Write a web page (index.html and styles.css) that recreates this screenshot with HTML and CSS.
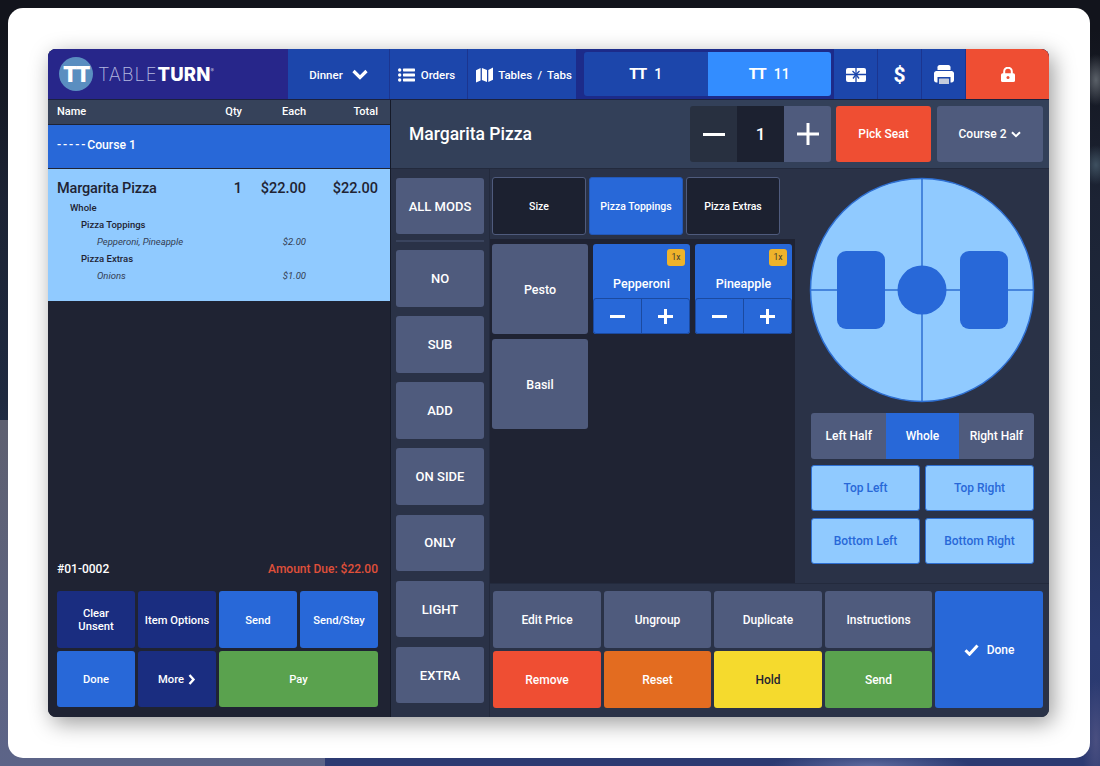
FILE: index.html
```html
<!DOCTYPE html>
<html>
<head>
    <title>TableTurn POS</title>
    <link rel="stylesheet" href="styles.css">
</head>
<body>
    <div class="card">
        <div class="app">
            <!-- Top bar -->
            <div class="topbar">
                <div class="logo">
                    <span class="logo-mark">TT</span>
                    <span class="logo-word">TABLE<b>TURN</b><i>&reg;</i></span>
                </div>
                <div class="nav nav-dinner">
                    <span>Dinner</span>
                    <svg width="16" height="11" viewBox="0 0 16 11"><path d="M1.500 2l6.500 6.500L14.500 2" fill="none" stroke="#fff" stroke-width="3.200"/></svg>
                </div>
                <div class="nav nav-orders">
                    <svg width="17" height="14" viewBox="0 0 17 14" fill="#fff"><circle cx="1.700" cy="2" r="1.700"/><circle cx="1.700" cy="7" r="1.700"/><circle cx="1.700" cy="12" r="1.700"/><rect x="5" y=".6" width="12" height="2.800" rx=".6"/><rect x="5" y="5.600" width="12" height="2.800" rx=".6"/><rect x="5" y="10.600" width="12" height="2.800" rx=".6"/></svg>
                    <span>Orders</span>
                </div>
                <div class="nav nav-tables">
                    <svg width="17" height="16" viewBox="0 0 17 16" fill="#fff"><path d="M0 3.200L4.600 1v12.400L0 15.600zM5.900 1L11 3v12l-5.100-2zM12.300 3L17 .4v12.400L12.300 15z"/></svg>
                    <span>Tables / Tabs</span>
                </div>
                <div class="terminals">
                    <div class="terminal"><span class="tt">TT</span> <span>1</span></div>
                    <div class="terminal terminal-on"><span class="tt">TT</span> <span>11</span></div>
                </div>
                <div class="nav nav-icon">
                    <svg width="20" height="14" viewBox="0 0 20 14"><rect width="20" height="14" rx="2" fill="#fff"/><path d="M10 0v14M0 6.500h20" stroke="#1c46ab" stroke-width="1.300"/><path d="M10 6.500L6.500 3M10 6.500L13.500 3M10 6.500L7 10.500M10 6.500l3 4" stroke="#1c46ab" stroke-width="1.300" fill="none"/></svg>
                </div>
                <div class="nav nav-icon nav-dollar">$</div>
                <div class="nav nav-icon">
                    <svg width="20" height="19" viewBox="0 0 20 19"><path d="M3.500 5V2.200C3.500 1 4.400 0 5.600 0h8.800c1.200 0 2.100 1 2.100 2.200V5z" fill="#fff"/><path d="M2.400 6h15.200C18.900 6 20 7.100 20 8.400V15c0 1.300-1 2.400-2.400 2.400h-1.100V12h-13v5.400H2.400C1 17.400 0 16.300 0 15V8.400C0 7.100 1.100 6 2.400 6z" fill="#fff"/><rect x="5" y="13.500" width="10" height="5.500" rx=".6" fill="#c4cbdc"/></svg>
                </div>
                <div class="nav nav-lock">
                    <svg width="14" height="15" viewBox="0 0 14 15"><path d="M3.200 7V4.500a3.800 3.800 0 0 1 7.600 0V7" fill="none" stroke="#fff" stroke-width="2"/><rect y="6.200" width="14" height="8.800" rx="1.600" fill="#fff"/><circle cx="7" cy="10.600" r="1.500" fill="#ef4e33"/></svg>
                </div>
            </div>

            <div class="main">
                <!-- Check on the left -->
                <div class="check">
                    <div class="check-head row">
                        <span>Name</span><span class="num">Qty</span><span class="num">Each</span><span class="num">Total</span>
                    </div>
                    <div class="course"><span class="dashes">-----</span>Course 1</div>
                    <div class="line">
                        <div class="row line-main">
                            <span>Margarita Pizza</span><span class="num">1</span><span class="num">$22.00</span><span class="num">$22.00</span>
                        </div>
                        <div class="row sub sub-1"><span>Whole</span></div>
                        <div class="row sub sub-2"><span>Pizza Toppings</span></div>
                        <div class="row sub sub-3"><span>Pepperoni, Pineapple</span><span></span><span class="num">$2.00</span></div>
                        <div class="row sub sub-2"><span>Pizza Extras</span></div>
                        <div class="row sub sub-3"><span>Onions</span><span></span><span class="num">$1.00</span></div>
                    </div>
                    <div class="check-space"></div>
                    <div class="check-info">
                        <span class="order-no">#01-0002</span>
                        <span class="due">Amount Due: $22.00</span>
                    </div>
                    <div class="check-btns">
                        <div class="btn navy">Clear<br>Unsent</div>
                        <div class="btn navy">Item Options</div>
                        <div class="btn blue">Send</div>
                        <div class="btn blue">Send/Stay</div>
                        <div class="btn blue">Done</div>
                        <div class="btn navy">More
                            <svg class="more-chev" width="8" height="11" viewBox="0 0 8 11"><path d="M1.500 1l4 4.500-4 4.500" fill="none" stroke="#fff" stroke-width="2.400"/></svg>
                        </div>
                        <div class="btn green wide">Pay</div>
                    </div>
                </div>

                <!-- Item editor -->
                <div class="editor">
                    <div class="item-bar">
                        <div class="item-title">Margarita Pizza</div>
                        <div class="stepper">
                            <div class="step step-minus"><svg width="22" height="3" viewBox="0 0 22 3"><rect width="22" height="3" fill="#fff"/></svg></div>
                            <div class="step step-val">1</div>
                            <div class="step step-plus"><svg width="22" height="22" viewBox="0 0 22 22"><path d="M0 11h22M11 0v22" stroke="#fff" stroke-width="3"/></svg></div>
                        </div>
                        <div class="btn red pick-seat">Pick Seat</div>
                        <div class="btn slate course-btn">Course 2
                            <svg width="10" height="7" viewBox="0 0 10 7"><path d="M1 1.200l4 4 4-4" fill="none" stroke="#fff" stroke-width="2"/></svg>
                        </div>
                    </div>
                    <div class="work">
                        <div class="mods">
                            <div class="btn slate mod mod-all">ALL MODS</div>
                            <div class="mods-rule"></div>
                            <div class="btn slate mod">NO</div>
                            <div class="btn slate mod">SUB</div>
                            <div class="btn slate mod">ADD</div>
                            <div class="btn slate mod">ON SIDE</div>
                            <div class="btn slate mod">ONLY</div>
                            <div class="btn slate mod">LIGHT</div>
                            <div class="btn slate mod">EXTRA</div>
                        </div>
                        <div class="work-right">
                            <div class="work-top">
                                <div class="middle">
                                    <div class="tabs">
                                        <div class="tab">Size</div>
                                        <div class="tab tab-on">Pizza Toppings</div>
                                        <div class="tab">Pizza Extras</div>
                                    </div>
                                    <div class="options">
                                        <div class="btn slate option">Pesto</div>
                                        <div class="topping">
                                            <span class="badge">1x</span>
                                            <div class="topping-name">Pepperoni</div>
                                            <div class="topping-steps">
                                                <div><svg width="15" height="3" viewBox="0 0 15 3"><rect width="15" height="3" fill="#fff"/></svg></div>
                                                <div><svg width="15" height="15" viewBox="0 0 15 15"><path d="M0 7.500h15M7.500 0v15" stroke="#fff" stroke-width="3"/></svg></div>
                                            </div>
                                        </div>
                                        <div class="topping">
                                            <span class="badge">1x</span>
                                            <div class="topping-name">Pineapple</div>
                                            <div class="topping-steps">
                                                <div><svg width="15" height="3" viewBox="0 0 15 3"><rect width="15" height="3" fill="#fff"/></svg></div>
                                                <div><svg width="15" height="15" viewBox="0 0 15 15"><path d="M0 7.500h15M7.500 0v15" stroke="#fff" stroke-width="3"/></svg></div>
                                            </div>
                                        </div>
                                        <div class="btn slate option">Basil</div>
                                    </div>
                                </div>
                                <div class="seat">
                                    <svg class="pizza" width="226" height="226" viewBox="0 0 226 226">
                                        <circle cx="113" cy="113" r="111.500" fill="#90caff" stroke="#2e6fd2" stroke-width="1.500"/>
                                        <path d="M113 2v222M2 113h222" stroke="#2e6fd2" stroke-width="1.500"/>
                                        <rect x="28" y="74" width="48" height="78" rx="9" fill="#2868d8"/>
                                        <rect x="151" y="74" width="48" height="78" rx="9" fill="#2868d8"/>
                                        <circle cx="113" cy="113" r="24.500" fill="#2868d8"/>
                                    </svg>
                                    <div class="halves">
                                        <div>Left Half</div>
                                        <div class="half-on">Whole</div>
                                        <div>Right Half</div>
                                    </div>
                                    <div class="quarters">
                                        <div class="quarter">Top Left</div>
                                        <div class="quarter">Top Right</div>
                                        <div class="quarter">Bottom Left</div>
                                        <div class="quarter">Bottom Right</div>
                                    </div>
                                </div>
                            </div>
                            <div class="actions">
                                <div class="btn slate">Edit Price</div>
                                <div class="btn slate">Ungroup</div>
                                <div class="btn slate">Duplicate</div>
                                <div class="btn slate">Instructions</div>
                                <div class="btn blue done">
                                    <svg width="15" height="12" viewBox="0 0 15 12"><path d="M1.500 6.200l4 4 8-8.600" fill="none" stroke="#fff" stroke-width="3"/></svg>
                                    Done
                                </div>
                                <div class="btn red">Remove</div>
                                <div class="btn orange">Reset</div>
                                <div class="btn yellow">Hold</div>
                                <div class="btn green">Send</div>
                            </div>
                        </div>
                    </div>
                </div>
            </div>
        </div>
    </div>
</body>
</html>
```

FILE: styles.css
```css
* { box-sizing: border-box; }
html, body { margin: 0; height: 766px; overflow: hidden; }
body {
    font-family: Roboto, "Liberation Sans", sans-serif;
    color: #fff;
    background:
        linear-gradient(180deg, #5e6070 0, #5c6488 346px) 0 420px / 325px 346px no-repeat,
        radial-gradient(ellipse 14px 26px at 1096px 80px, #5a6068 0%, rgba(90, 96, 104, 0) 100%),
        radial-gradient(ellipse 14px 20px at 1096px 165px, #3e5060 0%, rgba(62, 80, 96, 0) 100%),
        radial-gradient(ellipse 100px 14px at 870px 766px, #5d6a9e 0%, rgba(93, 106, 158, 0) 100%),
        radial-gradient(ellipse 14px 60px at 1096px 740px, #4a4f80 0%, rgba(74, 79, 128, 0) 100%),
        linear-gradient(180deg, #12141c 0, #12141c 30px, #1c2334 200px, #1f2a40 400px, #2a3a70 640px, #2c3a72 766px);
    padding: 8px 10px 8px 8px;
}

.card {
    width: 1082px;
    height: 750px;
    padding: 41px 41px 41px 40px;
    background: #fff;
    border-radius: 15px;
}
.app {
    width: 1001px;
    height: 668px;
    display: flex;
    flex-direction: column;
    border-radius: 8px;
    overflow: hidden;
    background: #1f2333;
    box-shadow: 4px 6px 22px rgba(0, 0, 0, 0.4);
}

/* top bar */
.topbar { display: flex; height: 51px; background: #1c2b6e; flex: none; border-bottom: 1px solid #1b2140; }
.logo { width: 240px; display: flex; align-items: center; padding-left: 11px; background: #27268a; }
.logo-mark {
    width: 34px; height: 34px; border-radius: 50%;
    background: #5a8ec0; color: #fff;
    display: flex; align-items: center; justify-content: center;
    font-family: Inter, sans-serif; font-weight: 900; font-size: 21px; letter-spacing: -1.500px;
}
.logo-word { margin-left: 5px; font-family: Inter, sans-serif; font-weight: 200; font-size: 18.500px; letter-spacing: 0.800px; color: #b4b8e0; white-space: nowrap; }
.logo-word b { font-weight: 800; color: #fff; letter-spacing: 0.200px; }
.logo-word i { font-size: 5px; font-style: normal; vertical-align: 9px; color: #fff; }
.nav {
    display: flex; align-items: center; justify-content: center; gap: 5px;
    padding-top: 1px;
    background: #1c46ab; font-size: 11.500px; font-weight: 500;
    border-right: 1px solid #1b3590; white-space: nowrap;
}
.nav-dinner { width: 102px; gap: 9px; }
.nav-orders { width: 78px; gap: 6px; padding-right: 4px; }
.nav-tables { width: 108px; border-right: 0; word-spacing: 2.500px; padding-left: 4px; }
.nav-icon { width: 44px; }
.nav-dollar { font-size: 21px; font-weight: 700; }
.nav-lock { width: 83px; background: #ef4e33; border: 0; }
.terminals { width: 258px; display: flex; padding: 3px; padding-left: 8px; background: #1c2b8a; }
.terminal {
    flex: 1; display: flex; align-items: center; justify-content: center; gap: 8px;
    background: #1c46ab; border-radius: 3px 0 0 3px; font-size: 14px; font-weight: 500;
}
.terminal-on { background: #338dff; border-radius: 0 3px 3px 0; }
.tt { font-weight: 800; letter-spacing: -1px; font-size: 15px; }

.main { flex: 1; display: flex; min-height: 0; }

/* check column */
.check { width: 342px; display: flex; flex-direction: column; background: #1f2333; flex: none; }
.row { display: grid; grid-template-columns: 1fr 20px 64px 72px; padding: 0 12px 0 9px; }
.num { text-align: right; }
.check-head { height: 24px; padding-bottom: 2px; align-items: center; background: #36425a; font-size: 11px; font-weight: 500; }
.course {
    height: 43px; margin-top: 1px; padding: 0 0 4px 9px; display: flex; align-items: center;
    background: #2868d8; font-size: 12.200px; font-weight: 500;
}
.dashes { letter-spacing: 1.900px; }
.line { height: 132px; margin-top: 1px; padding-top: 11px; background: #90caff; color: #1f2333; }
.line-main { font-size: 14.500px; font-weight: 500; height: 18px; line-height: 18px; margin-bottom: 1px; }
.line-main span:first-child { letter-spacing: -0.150px; }
.sub { font-size: 9.500px; height: 17px; line-height: 17px; }
.sub-1 span:first-child { padding-left: 13px; font-weight: 500; }
.sub-2 span:first-child { padding-left: 24px; font-weight: 500; }
.sub-3 { font-style: italic; color: #333c52; }
.sub-3 span:first-child { padding-left: 40px; }
.check-space { flex: 1; }
.check-info { display: flex; justify-content: space-between; align-items: center; padding: 0 12px 0 9px; height: 18px; margin-bottom: 13px; font-weight: 500; font-size: 12px; }
.due { color: #e0503a; }
.check-btns { display: grid; grid-template-columns: repeat(4, 78px); grid-template-rows: 57px 56px; gap: 3px; padding: 0 0 10px 9px; }
.check-btns .btn { padding-top: 1px; font-size: 11.200px; }
.wide { grid-column: span 2; }

/* buttons */
.btn {
    display: flex; align-items: center; justify-content: center; gap: 5px; text-align: center;
    border-radius: 3px; font-size: 11.500px; font-weight: 500; line-height: 13px;
}
.navy { background: #1a2d80; }
.blue { background: #2868d8; }
.green { background: #5aa24e; }
.red { background: #ef4e33; }
.orange { background: #e36c20; }
.yellow { background: #f5da2d; color: #1f2333; }
.slate { background: #4f5b7d; }
.more-chev { margin-left: -1px; }

/* editor */
.editor { flex: 1; display: flex; flex-direction: column; border-left: 1px solid #151a28; min-width: 0; }
.item-bar { height: 69px; display: flex; align-items: center; padding: 0 6px 0 18px; background: #334059; border-bottom: 1px solid #232a3d; flex: none; }
.item-title { flex: 1; font-size: 17.500px; font-weight: 500; }
.stepper { display: flex; height: 56px; width: 141px; border-radius: 3px; overflow: hidden; }
.step { flex: 1; display: flex; align-items: center; justify-content: center; font-size: 17px; font-weight: 500; }
.step-minus { background: #283040; }
.step-val { background: #1c2130; }
.step-plus { background: #4f5b7d; }
.pick-seat { width: 95px; height: 56px; margin-left: 5px; padding-top: 1px; font-size: 12px; }
.course-btn { width: 106px; height: 56px; margin-left: 6px; padding-top: 1px; font-size: 12px; }

.work { flex: 1; display: flex; min-height: 0; }
.mods { width: 99px; flex: none; display: flex; flex-direction: column; gap: 9.500px; padding: 9px 5px 13.500px 5px; background: #2a3247; border-right: 1px solid #232a3d; }
.mod { flex: 1; font-size: 13px; }
.mod-all { flex: none; height: 56px; }
.mods-rule { height: 2px; margin: -3.500px 0 -1.500px; background: #3a445e; flex: none; }

.work-right { flex: 1; display: flex; flex-direction: column; min-width: 0; }
.work-top { height: 414px; display: flex; flex: none; }
.middle { width: 305px; display: flex; flex-direction: column; flex: none; }
.tabs { height: 70px; display: flex; gap: 3px; padding: 8px 0 4px 2px; background: #2a3247; flex: none; }
.tab {
    width: 94px; display: flex; align-items: center; justify-content: center;
    background: #1c2130; border: 1.500px solid #4f5b7d; border-radius: 3px;
    font-size: 10.500px; font-weight: 500;
}
.tab-on { background: #2868d8; border-color: #2358b8; }
.options {
    flex: 1; display: grid; grid-template-columns: 96px 97px 97px; grid-auto-rows: 90px;
    gap: 5px; padding: 5px 0 0 2px; background: #1f2333; align-content: start;
}
.option { font-size: 12.500px; }
.topping { position: relative; display: flex; flex-direction: column; background: #2868d8; border-radius: 3px; overflow: hidden; }
.topping-name { flex: 1; padding-top: 24px; display: flex; align-items: center; justify-content: center; font-size: 12.500px; font-weight: 500; }
.topping-steps { height: 36px; display: flex; border: 1.500px solid #1b4aa0; border-radius: 3px; flex: none; }
.topping-steps div { flex: 1; display: flex; align-items: center; justify-content: center; }
.topping-steps div + div { border-left: 1.500px solid #1b4aa0; }
.badge {
    position: absolute; top: 5px; right: 5px; width: 18px; height: 17px;
    background: #eeb32b; border-radius: 3px; color: #3c3a30;
    font-size: 8.500px; line-height: 17px; text-align: center;
}

.seat { flex: 1; min-width: 0; padding: 8px 15px 0 16px; background: #2a3247; }
.pizza { display: block; margin: 0 -1px 10px -2px; }
.halves { display: flex; height: 46px; border-radius: 3px; overflow: hidden; background: #4f5b7d; font-size: 12px; font-weight: 500; }
.halves div { flex: 75; display: flex; align-items: center; justify-content: center; }
.halves .half-on { flex: 72; background: #2868d8; }
.quarters { display: grid; grid-template-columns: 1fr 1fr; grid-auto-rows: 46px; gap: 7px 5px; margin-top: 6px; }
.quarter {
    display: flex; align-items: center; justify-content: center;
    background: #90caff; border: 1.500px solid #2e6fd2; border-radius: 3px;
    color: #2868d8; font-size: 12px; font-weight: 500;
}

.actions {
    flex: 1; display: grid; grid-template-columns: 108px 107px 108px 107px 108px; grid-template-rows: 57px 57px;
    gap: 3px; padding: 7px 0 0 3px; background: #2a3247; border-top: 1px solid #232a3d;
}
.actions .btn { padding-top: 1px; font-size: 12px; }
.actions .done { grid-column: 5; grid-row: 1 / 3; gap: 8px; }
```
